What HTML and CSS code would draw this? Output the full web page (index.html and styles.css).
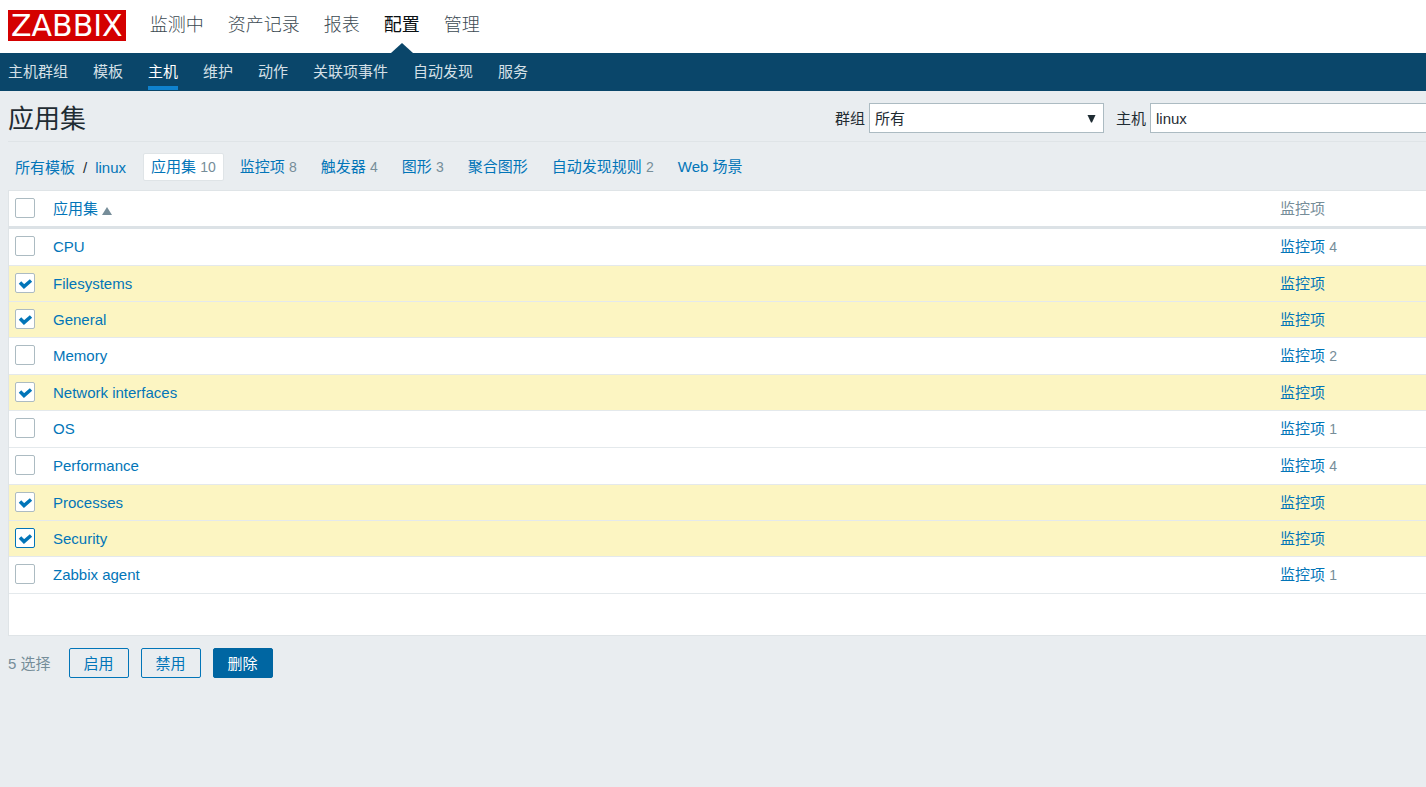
FILE: index.html
```html
<!DOCTYPE html>
<html lang="zh-CN">
<head>
<meta charset="utf-8">
<meta name="viewport" content="width=device-width, initial-scale=1">
<title>应用集</title>
<link rel="stylesheet" href="styles.css">
</head>
<body>
<header class="top">
  <a class="logo" href="#">ZABBIX</a>
  <nav class="top-nav">
    <a href="#">监测中</a>
    <a href="#">资产记录</a>
    <a href="#">报表</a>
    <a href="#" class="selected">配置</a>
    <a href="#">管理</a>
  </nav>
</header>
<nav class="sub-nav">
  <a href="#">主机群组</a>
  <a href="#">模板</a>
  <a href="#" class="selected">主机</a>
  <a href="#">维护</a>
  <a href="#">动作</a>
  <a href="#">关联项事件</a>
  <a href="#">自动发现</a>
  <a href="#">服务</a>
</nav>
<main class="content">
  <div class="title-bar">
    <h1>应用集</h1>
    <form class="filters">
      <label for="group">群组</label>
      <div class="select group-select">
        <select id="group"><option>所有</option></select>
        <svg width="9" height="8" viewBox="0 0 9 8" aria-hidden="true"><path d="M0.500 0h8L5 7.500H4z" fill="#1f2c33"/></svg>
      </div>
      <label for="host">主机</label>
      <div class="select host-select">
        <select id="host"><option>linux</option></select>
      </div>
    </form>
  </div>
  <nav class="tabs">
    <div class="crumbs"><a href="#">所有模板</a><span>/</span><a href="#">linux</a></div>
    <div class="tab current"><a href="#">应用集</a> <span class="count">10</span></div>
    <div class="tab"><a href="#">监控项</a> <span class="count">8</span></div>
    <div class="tab"><a href="#">触发器</a> <span class="count">4</span></div>
    <div class="tab"><a href="#">图形</a> <span class="count">3</span></div>
    <div class="tab"><a href="#">聚合图形</a></div>
    <div class="tab"><a href="#">自动发现规则</a> <span class="count">2</span></div>
    <div class="tab"><a href="#">Web 场景</a></div>
  </nav>
  <table class="list">
    <thead>
      <tr>
        <th class="check"><input type="checkbox" aria-label="全选"></th>
        <th><a href="#">应用集</a><svg class="sort" width="10" height="8" viewBox="0 0 10 8" aria-hidden="true"><path d="M5 0l5 8H0z" fill="#768d99"/></svg></th>
        <th class="items">监控项</th>
      </tr>
    </thead>
    <tbody>
      <tr><td class="check"><input type="checkbox" aria-label="CPU"></td><td><a href="#">CPU</a></td><td class="items"><a href="#">监控项</a> <span class="count">4</span></td></tr>
      <tr class="picked"><td class="check"><input type="checkbox" checked aria-label="Filesystems"></td><td><a href="#">Filesystems</a></td><td class="items"><a href="#">监控项</a></td></tr>
      <tr class="picked"><td class="check"><input type="checkbox" checked aria-label="General"></td><td><a href="#">General</a></td><td class="items"><a href="#">监控项</a></td></tr>
      <tr><td class="check"><input type="checkbox" aria-label="Memory"></td><td><a href="#">Memory</a></td><td class="items"><a href="#">监控项</a> <span class="count">2</span></td></tr>
      <tr class="picked"><td class="check"><input type="checkbox" checked aria-label="Network interfaces"></td><td><a href="#">Network interfaces</a></td><td class="items"><a href="#">监控项</a></td></tr>
      <tr><td class="check"><input type="checkbox" aria-label="OS"></td><td><a href="#">OS</a></td><td class="items"><a href="#">监控项</a> <span class="count">1</span></td></tr>
      <tr><td class="check"><input type="checkbox" aria-label="Performance"></td><td><a href="#">Performance</a></td><td class="items"><a href="#">监控项</a> <span class="count">4</span></td></tr>
      <tr class="picked"><td class="check"><input type="checkbox" checked aria-label="Processes"></td><td><a href="#">Processes</a></td><td class="items"><a href="#">监控项</a></td></tr>
      <tr class="picked"><td class="check"><input type="checkbox" class="active" checked aria-label="Security"></td><td><a href="#">Security</a></td><td class="items"><a href="#">监控项</a></td></tr>
      <tr><td class="check"><input type="checkbox" aria-label="Zabbix agent"></td><td><a href="#">Zabbix agent</a></td><td class="items"><a href="#">监控项</a> <span class="count">1</span></td></tr>
    </tbody>
    <tfoot>
      <tr><td colspan="3"></td></tr>
    </tfoot>
  </table>
  <div class="actions">
    <span class="chosen">5 选择</span>
    <button type="button">启用</button>
    <button type="button">禁用</button>
    <button type="button" class="primary">删除</button>
  </div>
</main>
</body>
</html>
```
FILE: styles.css
```css
* {
  box-sizing: border-box;
}

body {
  margin: 0;
  background: #e9edf0;
  color: #1f2c33;
  font: 15px/20px "Liberation Sans", "Noto Sans CJK SC", sans-serif;
}

a {
  color: #0275b8;
  text-decoration: none;
}

.top {
  display: flex;
  align-items: center;
  gap: 24px;
  height: 53px;
  padding: 0 8px 2px;
  background: #fff;
}

.logo {
  padding: 1px 3px 0;
  background: #d40000;
  color: #fff;
  font: 30px/30px "DejaVu Sans", sans-serif;
}

.top-nav {
  display: flex;
  gap: 24px;
  align-self: stretch;
  font-size: 18px;
  font-weight: 300;
  line-height: 50px;
}

.top-nav a {
  position: relative;
  color: #3c4a52;
}

.top-nav .selected {
  color: #0a0f12;
  font-weight: 400;
}

.top-nav .selected::after {
  content: "";
  position: absolute;
  left: 50%;
  bottom: -2px;
  margin-left: -11px;
  border: 11px solid transparent;
  border-top: 0;
  border-bottom: 10px solid #0a466a;
}

.sub-nav {
  display: flex;
  gap: 25px;
  height: 38px;
  padding: 0 8px;
  background: #0a466a;
  line-height: 38px;
}

.sub-nav a {
  height: 37px;
  color: #d5e0e7;
}

.sub-nav .selected {
  border-bottom: 4px solid #0f82ce;
  color: #fff;
}

.content {
  padding-left: 8px;
}

.title-bar {
  display: flex;
  align-items: flex-start;
  justify-content: space-between;
  height: 51px;
  padding-top: 12px;
  border-bottom: 1px solid #dfe4e7;
}

h1 {
  margin: 0;
  font-size: 26px;
  font-weight: 400;
  line-height: 32px;
}

.filters {
  display: flex;
  align-items: center;
  height: 30px;
}

.filters label {
  margin: 0 4px 0 12px;
  padding-top: 2px;
}

.select {
  position: relative;
  height: 30px;
}

.group-select {
  width: 235px;
}

.host-select {
  width: 276px;
}

.select select {
  width: 100%;
  height: 100%;
  padding: 2px 5px 0;
  appearance: none;
  border: 1px solid #acbbc2;
  border-radius: 0;
  background: #fff;
  color: #1f2c33;
  font: inherit;
}

.host-select select {
  border-right: 0;
}

.select svg {
  position: absolute;
  top: 12px;
  right: 8px;
}

.tabs {
  display: flex;
  align-items: center;
  gap: 8px;
  height: 48px;
  padding: 2px 0 0 7px;
}

.crumbs {
  display: flex;
  gap: 8px;
  margin-right: 9px;
  padding-top: 1px;
}

.tab {
  padding: 3px 7px;
  border: 1px solid transparent;
  border-radius: 2px;
}

.current {
  border-color: #dfe4e7;
  background: #fff;
}

.count {
  color: #768d99;
  font-size: 14px;
}

.list {
  width: 100%;
  border: 1px solid #dfe4e7;
  border-right: 0;
  border-spacing: 0;
  background: #fff;
}

.list th,
.list td {
  height: 37px;
  padding: 8px 5px 0;
  border-bottom: 1px solid #e4e9ec;
  font-weight: 400;
  text-align: left;
  vertical-align: top;
}

.list th {
  height: 38px;
  border-bottom: 3px solid #dce2e6;
  color: #768d99;
}

.list .picked td {
  height: 36px;
  background: #fcf5c2;
}

.list .check {
  width: 39px;
  padding: 7px 6px 0;
}

.list .items {
  width: 151px;
}

.list tfoot td {
  height: 41px;
  border-bottom: 0;
}

.sort {
  margin-left: 4px;
  vertical-align: -1px;
}

input[type="checkbox"] {
  display: block;
  width: 20px;
  height: 20px;
  margin: 0;
  appearance: none;
  border: 1px solid #acbbc2;
  border-radius: 2px;
  background: #fff;
}

input[type="checkbox"]:checked {
  background: #fff url("data:image/svg+xml,%3Csvg xmlns='http://www.w3.org/2000/svg' width='18' height='18'%3E%3Cpath d='M4 8.500l4 4L15 6.500' fill='none' stroke='%230275b8' stroke-width='3.500'/%3E%3C/svg%3E") center no-repeat;
}

input[type="checkbox"].active {
  border-color: #0275b8;
}

.actions {
  display: flex;
  align-items: center;
  gap: 12px;
  padding: 12px 0;
}

.chosen {
  margin-right: 6px;
  padding-top: 2px;
  color: #768d99;
}

.actions button {
  width: 60px;
  height: 30px;
  padding: 1px 0 0;
  border: 1px solid #0275b8;
  border-radius: 2px;
  background: transparent;
  color: #0275b8;
  font: inherit;
}

.actions .primary {
  border-color: #0066a2;
  background: #0066a2;
  color: #fff;
}
```
